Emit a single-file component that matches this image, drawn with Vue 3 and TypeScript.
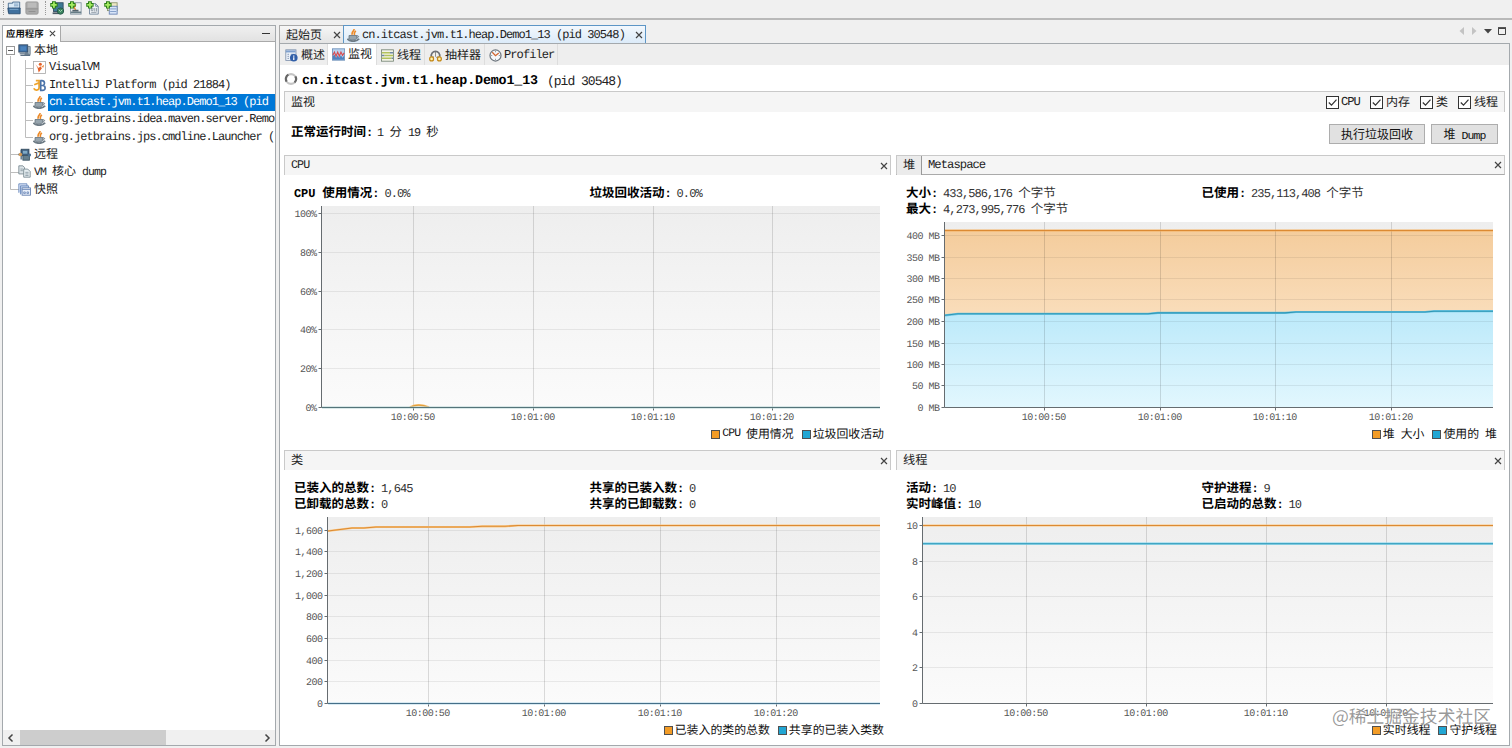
<script setup lang="ts">
import { h, type FunctionalComponent } from 'vue'

// Splits a label into Latin and Han runs so both keep a half/full width grid.
const Txt: FunctionalComponent<{ t: string }> = (props) => {
  const runs = props.t.match(/[\x00-\x7f]+|[^\x00-\x7f]+/g) ?? []
  return h(
    'span',
    { class: 'txt' },
    runs.map((r) => h('span', { class: r.charCodeAt(0) < 128 ? 'latin' : 'han' }, r)),
  )
}
Txt.props = ['t']

const plus = '<path d="M4.5 .3v8.4M.3 4.5h8.4" stroke="#2c7d18" stroke-width="4.4"/><path d="M4.500 1.400v6.200M1.400 4.500h6.200" stroke="#a5ec62" stroke-width="2.1"/>'
const screen = '<rect x="1" y="1" width="11" height="9" fill="#3e6ea4" stroke="#34485e"/><rect x="3" y="3" width="7" height="5" fill="#4b83bd"/>'
const cup = '<path d="M8.500 0c1 2-3.400 3.200-2 7M11 2.500C8.400 4 8.500 5 9.300 7.500" fill="none" stroke="#ed8a28" stroke-width="2"/><path d="M2.500 8h9.500v3.500c-1 2.500-8.500 2.500-9.500 0z" fill="#97a5ae" stroke="#65737e"/><path d="M12 8.500c3-.7 3 2 0 2.500" fill="none" stroke="#65737e" stroke-width="1.200"/><path d="M.5 12c3 4 11 4 14.500 0" fill="none" stroke="#6d7b85" stroke-width="2.200"/>'
const page = '<path d="M4 3h7l3 3v9H4z" fill="#edf1f5" stroke="#70849a"/><path d="M11 3v3h3" fill="none" stroke="#70849a"/>'
const icons: Record<string, string> = {
  open: '<path d="M1.5 13V2.5h5V1.2h8V9" fill="#d9e9f6" stroke="#42678b"/><path d="M8 3.5h5M8 5.5h5" stroke="#7398bd"/><path d="M1 8h14v6.6H2z" fill="#41719e" stroke="#294d71"/><path d="M3 9.5h10" stroke="#86b0d3"/>',
  save: '<rect x="1" y="1" width="14" height="14" rx="1.5" fill="#aaa" stroke="#999"/><rect x="3" y="2" width="10" height="5.5" fill="#bbb"/><path d="M1 9h14M4 12h8" stroke="#8e8e8e"/>',
  addHost: `<rect x="4" y="2" width="11" height="10" fill="#3f7a95" stroke="#314b60"/><path d="M3 14h9" stroke="#4c5a66" stroke-width="2"/><circle cx="12" cy="11.5" r="3.6" fill="#3c8660" stroke="#225447"/><path d="M10 10l2 2 2-2" fill="none" stroke="#b3e0c0"/>${plus}`,
  addJmx: `<rect x="3" y="2" width="12" height="13" fill="#eff2f4" stroke="#80919f"/><path d="M3 13h12" stroke="#667c86" stroke-width="2"/><path d="M9 4l-2 4 2 2" fill="none" stroke="#e68a34" stroke-width="1.5"/><path d="M5 11h7" stroke="#53636d" stroke-width="2"/>${plus}`,
  addDump: `${page}<path d="M6 8h2v3H6zM10 8v4M12 8v4M6 13h6" fill="none" stroke="#8b98a4"/>${plus}`,
  addSnap: `<rect x="4" y="2" width="11" height="9" fill="#eee8c4" stroke="#8a9470"/><rect x="6" y="6" width="9" height="9" fill="#d8e4f8" stroke="#6580b3"/><path d="M7 9h7M7 12h7" stroke="#7a97c4"/>${plus}`,
  local: `<path d="M12 3h3v10H8" fill="#a9b8c5" stroke="#647685"/>${screen}<path d="M2 12h11M3 14h12" stroke="#5b6f83" stroke-width="1.300"/>`,
  vvm: '<rect x=".6" y=".6" width="14.8" height="14.8" fill="#fff" stroke="#a8a8a8"/><path d="M3 4l2.500 4 1.500 6 4-5-2-2.500-2 2z" fill="#e4632a"/><circle cx="9" cy="4" r="1.9" fill="#e6632b"/><path d="M10 7.500l3.500-3L13 8z" fill="#ef8d43"/>',
  idea: '<path d="M3.500 2h4v8.500c0 4-5.500 4-6.500 1M1.500 7L8 4.500" fill="none" stroke="#efa32a" stroke-width="2.1"/><path d="M9.500 1.500V14h2c5 0 4-6 .5-6 3-.5 3-6-1-6H9M9 8h3" fill="none" stroke="#4a72a8" stroke-width="2"/>',
  java: cup,
  remote: `<path d="M0 8h16M4 2v12" stroke="#6b8296" stroke-width="2"/><rect x="4" y="1.5" width="9.5" height="8" fill="#426283" stroke="#30485c"/><rect x="6" y="3.5" width="5.5" height="3.5" fill="#7faac6"/><rect x="6" y="9" width="8" height="6" fill="#657f8e" stroke="#364e5d"/><circle cx="3" cy="8" r="2.200" fill="#d59a56"/><circle cx="14" cy="9" r="1.8" fill="#497193"/>`,
  dump: '<path d="M1 1h5l2 2v8H1z" fill="#dce4e8" stroke="#73828b"/><path d="M3 5h3M3 7h3" stroke="#84949d"/><path d="M7 5h5l3 3v7H7z" fill="#e6eef1" stroke="#73828b"/><path d="M9 9h4M9 11h4M9 13h4" stroke="#82939e"/>',
  snap: '<path d="M1 12V1h10v3" fill="#dfe9fa" stroke="#5d7fb5"/><path d="M3 14V3.5h10V6" fill="#c3d5ef" stroke="#5d7fb5"/><rect x="5" y="6" width="10.3" height="9" fill="#eaf0fa" stroke="#5976a8"/><path d="M5 8h10M7 11h2v2H7zM11 11h2v2h-2z" fill="none" stroke="#6b88b8"/>',
  overview: '<rect x="1" y="1" width="12.5" height="13" fill="#eff4fb" stroke="#788ba8"/><path d="M1 3h12" stroke="#7fa0cd" stroke-width="2.5"/><path d="M3 6.5h2M3 9h2M3 11.5h2M7 6.5h5" stroke="#7288a8"/><circle cx="10.8" cy="10.8" r="4.7" fill="#315fa8"/><path d="M10.8 8v1.4M10.8 10.2v3.3" stroke="#fff" stroke-width="1.5"/>',
  monitor: '<rect x=".6" y="1" width="15" height="14" fill="#b9d3ef" stroke="#688bb5"/><path d="M1 14.500V10l2-2 2 4 2-3 2 3 2-3 2 3 2-3v5.500z" fill="#4f82be"/><path d="M1 9l2-4 2 5 2-5 2 5 2-5 2 4 2-3" fill="none" stroke="#d74b50" stroke-width="1.4"/>',
  threads: '<rect x=".7" y="1" width="14.6" height="14" fill="#f4f4e8" stroke="#708070"/><path d="M1 4.5h10M4 8h11M1 11.5h12" stroke="#b2c25c" stroke-width="1.800"/><path d="M11 4.5h4M1 8h3M13 11.5h2" stroke="#6f87a5" stroke-width="1.800"/>',
  sampler: '<path d="M3 9.500a5.200 5.200 0 1 1 10 0" fill="#f3f2ed" stroke="#6d7074" stroke-width="2"/><path d="M8 3v6l2 2" fill="none" stroke="#777"/><path d="M5 9v5M11 9v5" stroke="#8b7b66" stroke-width="1.500"/><circle cx="3.2" cy="12.2" r="2.4" fill="#fff3b3" stroke="#c58915" stroke-width="1.500"/><circle cx="12.800" cy="12.2" r="2.4" fill="#fff3b3" stroke="#c58915" stroke-width="1.500"/>',
  profiler: '<circle cx="8" cy="8" r="6.8" fill="#f5f7fa" stroke="#6e767e" stroke-width="1.5"/><path d="M8 2.500V4M8 12v1.5M2.500 8H4M12 8h1.5" stroke="#7d8790"/><path d="M4 4l4 4.3L12 5" fill="none" stroke="#d1632c" stroke-width="1.5"/>',
}

interface Node { icon: string; label: string; level: number; on?: boolean }
const tree: Node[] = [
  { icon: 'local', label: '本地', level: 0 },
  { icon: 'vvm', label: 'VisualVM', level: 1 },
  { icon: 'idea', label: 'IntelliJ Platform (pid 21884)', level: 1 },
  { icon: 'java', label: 'cn.itcast.jvm.t1.heap.Demo1_13 (pid', level: 1, on: true },
  { icon: 'java', label: 'org.jetbrains.idea.maven.server.Remo', level: 1 },
  { icon: 'java', label: 'org.jetbrains.jps.cmdline.Launcher (', level: 1 },
  { icon: 'remote', label: '远程', level: 0 },
  { icon: 'dump', label: 'VM 核心 dump', level: 0 },
  { icon: 'snap', label: '快照', level: 0 },
]
const views = [
  { icon: 'overview', label: '概述' },
  { icon: 'monitor', label: '监视', on: true },
  { icon: 'threads', label: '线程' },
  { icon: 'sampler', label: '抽样器' },
  { icon: 'profiler', label: 'Profiler' },
]
const checks = ['CPU', '内存', '类', '线程']

interface Chart {
  id: string; title: string; tab?: string
  stats: [string, string][][]
  box: [number, number, number, number]
  plot: [number, number, number, number]
  y: [string, number][]
  x: number[]
  areas?: { d: string; fill: string }[]
  lines: { d: string; halo: string; color: string }[]
  legend: [string, string]
}
const times = ['10:00:50', '10:01:00', '10:01:10', '10:01:20']
const ORANGE = '#dc8a33'
const BLUE = '#2d96b5'
const OH = '#fbc883'
const BH = '#7fd4ee'
const used = 'M945 315.3L958 313.8H1148L1158 312.9H1285L1296 312H1425L1434 311.2H1493'

const charts: Chart[] = [
  {
    id: 'cpu', title: 'CPU',
    stats: [[['CPU 使用情况:', '0.0%'], ['垃圾回收活动:', '0.0%']]],
    box: [284, 202, 607, 223], plot: [321.5, 206, 880, 407.5],
    y: [['100%', 213.5], ['80%', 252.5], ['60%', 291.5], ['40%', 329.5], ['20%', 368.5], ['0%', 407.5]],
    x: [413.5, 533.5, 653.5, 772.5],
    lines: [{ d: 'M410 407.2C415 404.6 422 404.6 429 407.2', halo: OH, color: '#e2a03c' }, { d: 'M322 407.5H880', halo: '#b5d4d4', color: '#54747a' }],
    legend: ['CPU 使用情况', '垃圾回收活动'],
  },
  {
    id: 'heap', title: '堆', tab: 'Metaspace',
    stats: [[['大小:', '433,586,176 个字节'], ['已使用:', '235,113,408 个字节']], [['最大:', '4,273,995,776 个字节']]],
    box: [896, 218, 609, 207], plot: [944.5, 222, 1493, 407.5],
    y: [['400 MB', 235.5], ['350 MB', 257.5], ['300 MB', 278.5], ['250 MB', 299.5], ['200 MB', 321.5], ['150 MB', 343.5], ['100 MB', 364.5], ['50 MB', 385.5], ['0 MB', 407.5]],
    x: [1044.5, 1160.5, 1275.5, 1391.5],
    areas: [{ d: 'M945 230.5H1493V407H945z', fill: 'url(#heapOrange)' }, { d: used + 'V407H945z', fill: 'url(#heapBlue)' }],
    lines: [{ d: 'M945 230.5H1493', halo: '#f4b060', color: ORANGE }, { d: used, halo: '#6cc5e2', color: BLUE }],
    legend: ['堆 大小', '使用的 堆'],
  },
  {
    id: 'classes', title: '类',
    stats: [[['已装入的总数:', '1,645'], ['共享的已装入数:', '0']], [['已卸载的总数:', '0'], ['共享的已卸载数:', '0']]],
    box: [284, 513, 607, 208], plot: [327.5, 517, 880, 703.5],
    y: [['1,600', 530.5], ['1,400', 551.5], ['1,200', 573.5], ['1,000', 595.5], ['800', 616.5], ['600', 638.5], ['400', 660.5], ['200', 681.5], ['0', 703.5]],
    x: [428.5, 544.5, 660.5, 776.5],
    lines: [{ d: 'M328 531L352 528H364L376 527H470L482 526.3H505L518 525.5H880', halo: OH, color: ORANGE }, { d: 'M328 703.5H880', halo: '#b5d8e8', color: '#456f88' }],
    legend: ['已装入的类的总数', '共享的已装入类数'],
  },
  {
    id: 'threads', title: '线程',
    stats: [[['活动:', '10'], ['守护进程:', '9']], [['实时峰值:', '10'], ['已启动的总数:', '10']]],
    box: [896, 513, 609, 208], plot: [922.5, 517, 1493, 703.5],
    y: [['10', 525.5], ['8', 561.5], ['6', 596.5], ['4', 632.5], ['2', 667.5], ['0', 703.5]],
    x: [1026.5, 1146.5, 1266.5, 1386.5],
    lines: [{ d: 'M923 525.5H1493', halo: OH, color: ORANGE }, { d: 'M923 543.7H1493', halo: BH, color: BLUE }],
    legend: ['实时线程', '守护线程'],
  },
]
</script>

<template>
  <div class="app">
    <header class="toolbar">
      <i class="grip"></i>
      <svg class="ti" viewBox="0 0 16 16" v-html="icons.open"></svg>
      <svg class="ti" viewBox="0 0 16 16" v-html="icons.save"></svg>
      <i class="grip second"></i>
      <svg v-for="n in ['addHost', 'addJmx', 'addDump', 'addSnap']" :key="n" class="ti" viewBox="0 0 16 16" v-html="icons[n]"></svg>
    </header>

    <div class="work">
      <aside class="side">
        <div class="side-head">
          <div class="side-tab"><Txt t="应用程序" />
            <svg class="x" viewBox="0 0 8 8"><path d="M1 1l6 6M7 1L1 7" /></svg>
          </div>
          <i class="min"></i>
        </div>
        <div class="tree">
          <svg class="guides" viewBox="0 0 45 156">
            <path d="M7.500 14V147.500M7.500 112.500H16M7.500 130.500H16M7.500 147.500H16M22.500 18V95.500M22.500 26.500H30M22.500 43.500H30M22.500 60.500H30M22.500 78.500H30M22.500 95.500H30" stroke="#bdbdbd" fill="none" />
            <rect x="3.500" y="4.500" width="8" height="8" fill="#fff" stroke="#989898" /><path d="M5 8.500h5" stroke="#555" />
          </svg>
          <div v-for="n in tree" :key="n.label" class="node" :class="{ deep: n.level, on: n.on }">
            <svg viewBox="0 0 16 16" v-html="icons[n.icon]"></svg>
            <div class="label"><Txt :t="n.label" /></div>
          </div>
        </div>
        <div class="hscroll">
          <svg viewBox="0 0 8 10"><path d="M5.500 1.500L2 5l3.500 3.500" /></svg>
          <i class="thumb"></i>
          <svg viewBox="0 0 8 10"><path d="M2.500 1.500L6 5 2.500 8.500" /></svg>
        </div>
      </aside>

      <main class="main">
        <div class="tabs">
          <div class="tab start"><Txt t="起始页" /><svg class="x" viewBox="0 0 8 8"><path d="M1 1l6 6M7 1L1 7" /></svg></div>
          <div class="tab current">
            <svg class="ic" viewBox="0 0 16 16" v-html="icons.java"></svg>
            <Txt t="cn.itcast.jvm.t1.heap.Demo1_13 (pid 30548)" />
            <svg class="x" viewBox="0 0 8 8"><path d="M1 1l6 6M7 1L1 7" /></svg>
          </div>
          <svg class="nav" viewBox="0 0 52 12">
            <path d="M6 2v8L1.500 6zM14 2v8l4.500-4z" fill="#c3c3c3" />
            <path d="M26 4h8l-4 4.500z" fill="#444" />
            <path d="M40.500 3.500h7v6h-7z" fill="none" stroke="#444" /><path d="M40 3h8" stroke="#444" stroke-width="1.800" />
          </svg>
        </div>

        <div class="doc">
          <div class="views">
            <div v-for="v in views" :key="v.label" class="view" :class="{ on: v.on }">
              <svg viewBox="0 0 16 16" v-html="icons[v.icon]"></svg><Txt :t="v.label" />
            </div>
          </div>
          <div class="title">
            <svg viewBox="0 0 16 16"><circle cx="8" cy="8" r="5.600" fill="none" stroke="#c4c4c4" stroke-width="2.400" /><path d="M3 11a5.600 5.600 0 0 1 2-8M13 5a5.600 5.600 0 0 1-1 7" fill="none" stroke="#666" stroke-width="2.400" /></svg>
            <b><Txt t="cn.itcast.jvm.t1.heap.Demo1_13" /></b><Txt class="pid" t="(pid 30548)" />
          </div>
          <div class="bar">
            <Txt t="监视" />
            <div class="checks">
              <label v-for="c in checks" :key="c"><svg viewBox="0 0 13 13"><rect x=".5" y=".5" width="12" height="12" fill="#fff" stroke="#333" /><path d="M2.800 6.500l2.700 2.700 5-5.500" fill="none" stroke="#333" stroke-width="1.200" /></svg><Txt :t="c" /></label>
            </div>
          </div>
          <div class="info">
            <p><b><Txt t="正常运行时间:" /></b><Txt t="1 分 19 秒" /></p>
            <button class="gc"><Txt t="执行垃圾回收" /></button>
            <button class="hd"><Txt t="堆 Dump" /></button>
          </div>

          <div class="grid">
            <section v-for="c in charts" :key="c.id" class="panel" :class="c.id">
              <div class="head" :class="{ tabbed: c.tab }">
                <div class="name"><Txt :t="c.title" /></div>
                <Txt v-if="c.tab" class="other" :t="c.tab" />
                <svg class="x" viewBox="0 0 8 8"><path d="M1 1l6 6M7 1L1 7" /></svg>
              </div>
              <div class="stats">
                <div v-for="(row, i) in c.stats" :key="i" class="stat-row">
                  <span v-for="s in row" :key="s[0]" class="stat"><b><Txt :t="s[0]" /></b><Txt :t="s[1]" /></span>
                </div>
              </div>
              <svg class="chart" :viewBox="c.box.join(' ')" :width="c.box[2]" :height="c.box[3]">
                <defs>
                  <linearGradient :id="'bg-' + c.id" x1="0" y1="0" x2="0" y2="1"><stop offset="0" stop-color="#eeeeee" /><stop offset="1" stop-color="#fbfbfb" /></linearGradient>
                  <linearGradient id="heapOrange" gradientUnits="userSpaceOnUse" x1="0" y1="230" x2="0" y2="407"><stop offset="0" stop-color="#f4cc9c" /><stop offset="1" stop-color="#fff0dc" /></linearGradient>
                  <linearGradient id="heapBlue" gradientUnits="userSpaceOnUse" x1="0" y1="311" x2="0" y2="407"><stop offset="0" stop-color="#bbe9fa" /><stop offset="1" stop-color="#e2f7fe" /></linearGradient>
                </defs>
                <rect :x="c.plot[0]" :y="c.plot[1]" :width="c.plot[2] - c.plot[0]" :height="c.plot[3] - c.plot[1]" :fill="`url(#bg-${c.id})`" />
                <path v-for="a in c.areas" :key="a.fill" :d="a.d" :fill="a.fill" />
                <path v-for="t in c.y" :key="'h' + t[0]" :d="`M${c.plot[0]} ${t[1]}H${c.plot[2]}`" stroke="#000" stroke-opacity=".07" />
                <path v-for="x in c.x" :key="'v' + x" :d="`M${x} ${c.plot[1]}V${c.plot[3]}`" stroke="#000" stroke-opacity=".13" />
                <path :d="`M${c.plot[0]} ${c.plot[1]}V${c.plot[3]}H${c.plot[2]}`" fill="none" stroke="#666c70" />
                <path v-for="x in c.x" :key="'t' + x" :d="`M${x} ${c.plot[3]}v3`" stroke="#666c70" />
                <path v-for="t in c.y" :key="'u' + t[0]" :d="`M${c.plot[0]} ${t[1]}h-3`" stroke="#666c70" />
                <template v-for="l in c.lines" :key="l.d">
                  <path :d="l.d" fill="none" :stroke="l.halo" stroke-width="2.200" />
                  <path :d="l.d" fill="none" :stroke="l.color" stroke-width="1.100" />
                </template>
                <text v-for="t in c.y" :key="'l' + t[0]" class="axis" text-anchor="end" :x="c.plot[0] - 5" :y="t[1] + 3.200">{{ t[0] }}</text>
                <text v-for="(x, i) in c.x" :key="'m' + x" class="axis" text-anchor="middle" :x="x - .7" :y="c.plot[3] + 12.700">{{ times[i] }}</text>
              </svg>
              <div class="legend">
                <span><i class="sw orange"></i><Txt :t="c.legend[0]" /></span>
                <span><i class="sw blue"></i><Txt :t="c.legend[1]" /></span>
              </div>
            </section>
          </div>
        </div>
      </main>
    </div>
    <div class="mark">@稀土掘金技术社区</div>
  </div>
</template>

<style>
html, body { background: #f0f0f0; overflow: hidden; }
.txt { white-space: pre; display: inline-block; }
.txt .latin { font-family: "Liberation Mono", monospace; font-size: .96em; letter-spacing: -.0785em; }
.txt .han { font-family: "Noto Sans CJK SC", sans-serif; }
b .txt .latin { letter-spacing: -.01em; }
</style>

<style scoped>
.app { position: relative; width: 1512px; height: 748px; overflow: hidden; background: #f0f0f0; color: #222; font: 12.500px/17px "Liberation Mono", "Noto Sans CJK SC", monospace; text-rendering: geometricPrecision; display: flex; flex-direction: column; }
.app * { box-sizing: border-box; }
.toolbar { height: 20px; flex: none; display: flex; align-items: flex-start; padding: 1px 0 0 3px; border-bottom: 2px solid #b9b9b9; }
.ti { width: 14px; height: 14px; margin-right: 4.300px; flex: none; }
.grip { width: 1px; height: 14px; border-left: 1px dotted #999; margin-right: 3px; }
.grip.second { margin: 0 3.500px 0 1.500px; }
.work { flex: 1; display: flex; padding: 5px 2px 2px; gap: 3px; min-height: 0; }
.x { width: 8px; height: 8px; stroke: #444; stroke-width: 1.200; fill: none; flex: none; }

.side { width: 274px; flex: none; border: 1px solid #a4a9ad; background: #fff; display: flex; flex-direction: column; }
.side-head { height: 16px; flex: none; display: flex; align-items: center; justify-content: space-between; background: linear-gradient(#f0f0f0, #e2e2e2); border-bottom: 1px solid #a9a9a9; }
.side-tab { height: 16px; width: 58px; background: #fff; border-right: 1px solid #a9a9a9; display: flex; align-items: center; padding-left: 3px; font-size: 9.400px; font-weight: 700; gap: 5px; color: #111; }
.side-tab .x { width: 7px; height: 7px; }
.min { width: 8px; height: 1px; background: #333; margin-right: 5px; }
.tree { position: relative; flex: 1; overflow: hidden; }
.guides { position: absolute; left: 0; top: 0; width: 45px; height: 156px; }
.node { position: relative; height: 17.330px; display: flex; align-items: center; padding-left: 15px; white-space: nowrap; }
.node svg { width: 13px; height: 13px; flex: none; margin-right: 3px; }
.node.deep { padding-left: 30px; }
.node.deep .label { flex: 1; height: 17px; margin-left: -1px; padding-left: 1px; }
.node.on .label { background: #0078d7; color: #fff; }
.node:not(.deep) .label { font-size: 12px; }
.hscroll { height: 15px; flex: none; background: #f0f0f0; display: flex; align-items: center; padding: 0 4px; }
.hscroll svg { width: 8px; height: 10px; fill: none; stroke: #444; stroke-width: 1.500; }
.thumb { width: 146px; height: 15px; background: #cdcdcd; margin: 0 97px 0 5px; }

.main { flex: 1; display: flex; flex-direction: column; min-width: 0; }
.tabs { height: 18px; flex: none; display: flex; align-items: stretch; }
.tab { display: flex; align-items: center; border: 1px solid #a9a9a9; border-bottom: 0; }
.start { width: 65px; padding: 1px 0 0 6px; gap: 11px; font-size: 12px; background: linear-gradient(#f6f6f6, #e4e4e4); }
.current { width: 303px; margin-left: -1px; border-color: #5d96c6; background: linear-gradient(#f3f8fd, #dcebf9); padding: 1px 0 0 3px; }
.current .ic { width: 13px; height: 13px; margin-right: 2px; }
.current .x { margin-left: 10px; }
.nav { width: 52px; height: 12px; margin: 0 0 0 auto; }
.doc { flex: 1; border: 1px solid #a4a9ad; background: #fff; min-height: 0; }
.views { height: 21px; background: #eee; display: flex; }
.view { display: flex; align-items: center; gap: 3px; padding: 2px 0 0 5px; border-right: 1px solid #ddd; font-size: 12px; }
.view svg { width: 13px; height: 13px; flex: none; }
.view:nth-child(1) { width: 48px; }
.view:nth-child(2) { width: 49px; padding: 0 0 1px 4px; }
.view:nth-child(3) { width: 48px; padding-left: 4px; }
.view:nth-child(4) { width: 60px; padding-left: 4px; }
.view:nth-child(5) { width: 73px; padding-left: 4px; gap: 2px; font-size: 12.600px; }
.view.on { background: #fff; }
.title { height: 26px; display: flex; align-items: center; padding: 7px 0 0 4px; font-size: 13.600px; color: #222; }
.title svg { width: 14px; height: 14px; margin: -6px 4px 0 0; }
.title b { color: #000; font-size: 13.900px; width: 245px; }
.bar { height: 21px; margin: 0 4px; padding: 0 6px 0 6px; display: flex; align-items: center; justify-content: space-between; background: #f5f5f5; border: 1px solid #c9c9c9; border-bottom: 0; font-size: 12px; }
.checks { display: flex; gap: 10px; }
.checks label { display: flex; align-items: center; gap: 3px; }
.checks label:first-child { font-size: 12.700px; gap: 2px; }
.checks svg { width: 13px; height: 13px; }
.info { height: 43px; display: flex; align-items: center; padding: 0 11px 0 11px; }
.info p { margin: -4px auto 0 0; font-size: 12.300px; }
.info b { color: #000; margin-right: 4px; font-size: 12.500px; }
button { height: 20px; margin: 0 0 0 6px; padding: 0; background: #e1e1e1; border: 1px solid #adadad; font-size: 12px; line-height: 17px; color: #111; }
.gc { width: 96px; }
.hd { width: 67px; }

.grid { display: grid; grid-template-columns: 607px 609px; gap: 0 5px; padding-left: 4px; grid-template-rows: 295px 290px; }
.panel { display: flex; flex-direction: column; }
.head { height: 20px; flex: none; display: flex; align-items: center; background: #f5f5f5; border: 1px solid #c9c9c9; border-bottom: 0; padding-right: 2px; font-size: 12.200px; }
.head .x { margin-left: auto; }
.name { padding-left: 6px; }
.tabbed { border-bottom: 1px solid #aaa; }
.tabbed .name { width: 25px; height: 19px; background: #ebebeb; border-right: 1px solid #999; }
.other { margin-left: 6px; font-size: 12.700px; }
.stats { padding: 7.500px 0 2px 10px; color: #333; flex: none; }
.stat-row { height: 16.500px; display: flex; }
.stat { width: 295.500px; white-space: nowrap; font-size: 12.500px; }
.stat b { color: #000; margin-right: 5px; font-size: 12.500px; }
.chart { display: block; flex: none; margin-top: .500px; }
.cpu .chart { margin-top: 1px; }
.axis { font: 10px "Liberation Mono", monospace; fill: #555; letter-spacing: -.500px; }
.legend { display: flex; justify-content: flex-end; gap: 8px; padding-right: 8px; font-size: 11.900px; line-height: 18px; color: #111; }
.cpu .legend, .classes .legend { padding-right: 7px; }
.legend span { display: flex; align-items: center; }
.sw { width: 9px; height: 9px; border: 1px solid #505050; margin-right: 2px; }
.orange { background: #f39c26; }
.blue { background: #22a6d3; }
.mark { position: absolute; right: 21px; top: 703px; font: 17.800px/26px "Noto Sans CJK SC", sans-serif; color: rgba(120, 120, 120, .75); text-shadow: 0 0 2px #fff; white-space: nowrap; }
</style>
